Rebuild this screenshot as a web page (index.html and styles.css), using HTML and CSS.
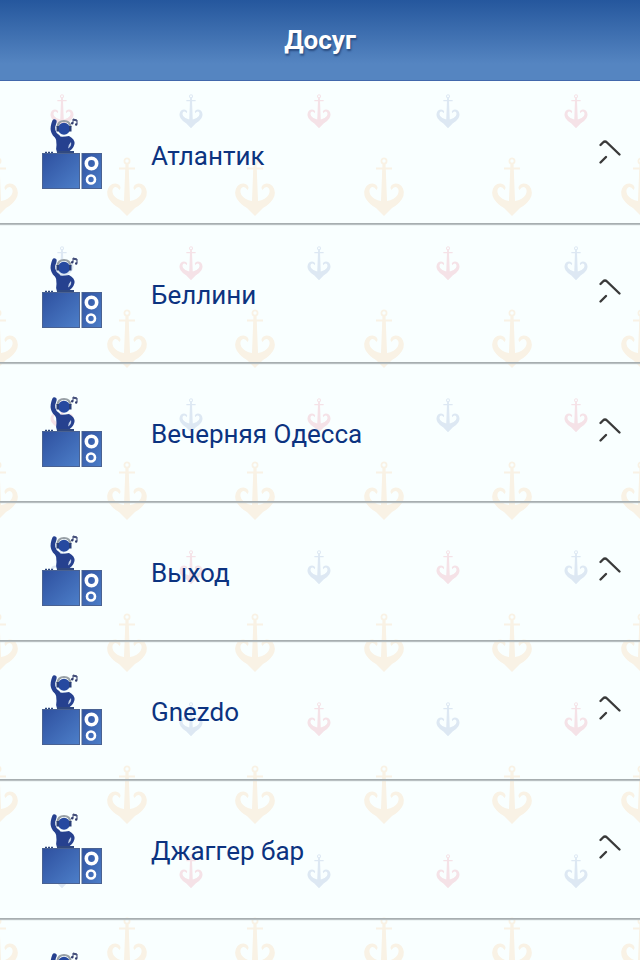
FILE: index.html
```html
<!DOCTYPE html>
<html lang="ru">
<head>
<meta charset="utf-8">
<meta name="viewport" content="width=device-width, initial-scale=1">
<title>Досуг</title>
<link rel="stylesheet" href="styles.css">
</head>
<body>
<svg class="backdrop" aria-hidden="true">
  <defs>
    <g id="anchor">
      <circle cx="0" cy="4" r="2.6" fill="none" stroke="currentColor" stroke-width="1.8"/>
      <path fill="currentColor" d="M-1.600 6.500H1.600V10.500H8V12.500H1.800L3 44Q10 43 13.500 38Q16 33 13 30.500Q10 29 7.500 33Q5 30 8.500 27.500Q13 25 17.500 29Q22 35 18 42Q14 48 8 51L0 59L-8 51Q-14 48 -18 42Q-22 35 -17.500 29Q-13 25 -8.500 27.500Q-5 30 -7.500 33Q-10 29 -13 30.500Q-16 33 -13.500 38Q-10 43 -3 44L-1.800 12.500H-8V10.500H-1.600Z"/>
    </g>
    <pattern id="anchors" width="257" height="304" patternUnits="userSpaceOnUse">
      <g class="sand">
        <use href="#anchor" x="127" y="157"/>
        <use href="#anchor" x="255" y="157"/>
        <use href="#anchor" x="-2" y="157"/>
        <use href="#anchor" x="127" y="5"/>
        <use href="#anchor" x="255" y="5"/>
        <use href="#anchor" x="-2" y="5"/>
      </g>
      <g class="rose">
        <use href="#anchor" transform="translate(62 94) scale(.58)"/>
        <use href="#anchor" transform="translate(191 246) scale(.58)"/>
      </g>
      <g class="sky">
        <use href="#anchor" transform="translate(191 94) scale(.58)"/>
        <use href="#anchor" transform="translate(62 246) scale(.58)"/>
      </g>
    </pattern>
    <linearGradient id="blue" x1="0" y1="0" x2="1" y2="1">
      <stop offset="0" stop-color="#2e509f"/>
      <stop offset="1" stop-color="#4d7fc9"/>
    </linearGradient>
    <symbol id="dj" viewBox="0 0 60 72">
      <path d="M12.500 3.500Q8 14 16 19" fill="none" stroke="#26418f" stroke-width="4.500" stroke-linecap="round"/>
      <path d="M12 17Q18 20 27 18Q33 21 32.500 26Q31 32 25 34.500H15Q13.500 31 14.500 27Q15 22 12 17Z" fill="#26418f"/>
      <path d="M29 24Q30 28 26 30.500Q26 27 29 24Z" fill="#c3d2ea"/>
      <circle cx="22" cy="10.800" r="6" fill="#2649a0"/>
      <path d="M15.500 9Q16 3 22 3Q28 3 28.500 9" fill="none" stroke="#98a0a6" stroke-width="2.200"/>
      <path d="M14.500 8H17V13.500H14.500ZM27 8H29.500V13.500H27Z" fill="#293f78"/>
      <path d="M31 5V1L35 2V6M31 2L35 3" fill="none" stroke="#303b6c" stroke-width="1"/>
      <circle cx="30.200" cy="5.300" r="1.200" fill="#303b6c"/>
      <circle cx="34.200" cy="6.500" r="1.200" fill="#303b6c"/>
      <path d="M3 34.500H11" stroke="#304980" stroke-width="1.500" stroke-dasharray="2 1"/>
      <path d="M15 34H32" stroke="#304980" stroke-width="2"/>
      <rect x=".5" y="35.500" width="37" height="35" fill="url(#blue)" stroke="#4a6292"/>
      <rect x="40" y="35.500" width="19.500" height="35" fill="url(#blue)" stroke="#4a6292"/>
      <circle cx="49.500" cy="45.500" r="5.200" fill="none" stroke="#fff" stroke-width="3.600"/>
      <circle cx="49" cy="61.500" r="4" fill="none" stroke="#fff" stroke-width="2.600"/>
    </symbol>
    <symbol id="chevron" viewBox="0 0 24 32">
      <path d="M2.500 7L5 4.500Q7 2.500 9 4.500L21.500 16.500M2.500 24.500L8 19" fill="none" stroke="#3a3a3a" stroke-width="2.400" stroke-linecap="round"/>
    </symbol>
  </defs>
  <rect width="100%" height="100%" fill="url(#anchors)"/>
</svg>
<header class="bar"><h1>Досуг</h1></header>
<main>
  <ul class="places">
    <li><a class="place" href="#atlantic"><svg class="dj"><use href="#dj"/></svg><span class="name">Атлантик</span><svg class="chevron"><use href="#chevron"/></svg></a></li>
    <li><a class="place" href="#bellini"><svg class="dj"><use href="#dj"/></svg><span class="name">Беллини</span><svg class="chevron"><use href="#chevron"/></svg></a></li>
    <li><a class="place" href="#odessa"><svg class="dj"><use href="#dj"/></svg><span class="name">Вечерняя Одесса</span><svg class="chevron"><use href="#chevron"/></svg></a></li>
    <li><a class="place" href="#vyhod"><svg class="dj"><use href="#dj"/></svg><span class="name">Выход</span><svg class="chevron"><use href="#chevron"/></svg></a></li>
    <li><a class="place" href="#gnezdo"><svg class="dj"><use href="#dj"/></svg><span class="name">Gnezdo</span><svg class="chevron"><use href="#chevron"/></svg></a></li>
    <li><a class="place" href="#jagger"><svg class="dj"><use href="#dj"/></svg><span class="name">Джаггер бар</span><svg class="chevron"><use href="#chevron"/></svg></a></li>
    <li class="next"><svg class="dj" aria-hidden="true"><use href="#dj"/></svg></li>
  </ul>
</main>
</body>
</html>
```
FILE: styles.css
```css
* {
  box-sizing: border-box;
}

body {
  margin: 0;
  height: 100vh;
  overflow: hidden;
  display: flex;
  flex-direction: column;
  background: #f9ffff;
  font-family: Roboto, sans-serif;
  color: #0c3380;
}

.backdrop {
  position: absolute;
  inset: 0;
  z-index: -1;
  width: 100%;
  height: 100%;
}

.sand { color: #f9f2e5; }
.rose { color: #f5e2e7; }
.sky { color: #dde8f3; }

.bar {
  flex: none;
  padding: 20px 16px;
  border-bottom: 1px solid #4268ac;
  background: linear-gradient(#25579d, #5585c1 80%, #5585c1);
  text-align: center;
}

.bar h1 {
  margin: 0;
  font: bold 26px/40px Roboto, sans-serif;
  color: #fff;
  text-shadow: 1px 2px 2px #2a4c80;
}

main {
  flex: 1;
  min-height: 0;
  overflow: hidden;
}

.places {
  margin: 0;
  padding: 4px 0 0;
  list-style: none;
}

.place,
.next {
  display: flex;
  align-items: center;
  min-height: 139px;
  padding: 0 18px 0 42px;
  border-bottom: 1px solid #a7aeb0;
  box-shadow: 0 1px 1px #b9c0c2;
  color: inherit;
  text-decoration: none;
}

.dj {
  flex: none;
  width: 60px;
  height: 72px;
}

.name {
  flex: 1;
  margin-left: 49px;
  padding-top: 4px;
  font-size: 26px;
  line-height: 36px;
}

.chevron {
  flex: none;
  width: 24px;
  height: 32px;
}
```
